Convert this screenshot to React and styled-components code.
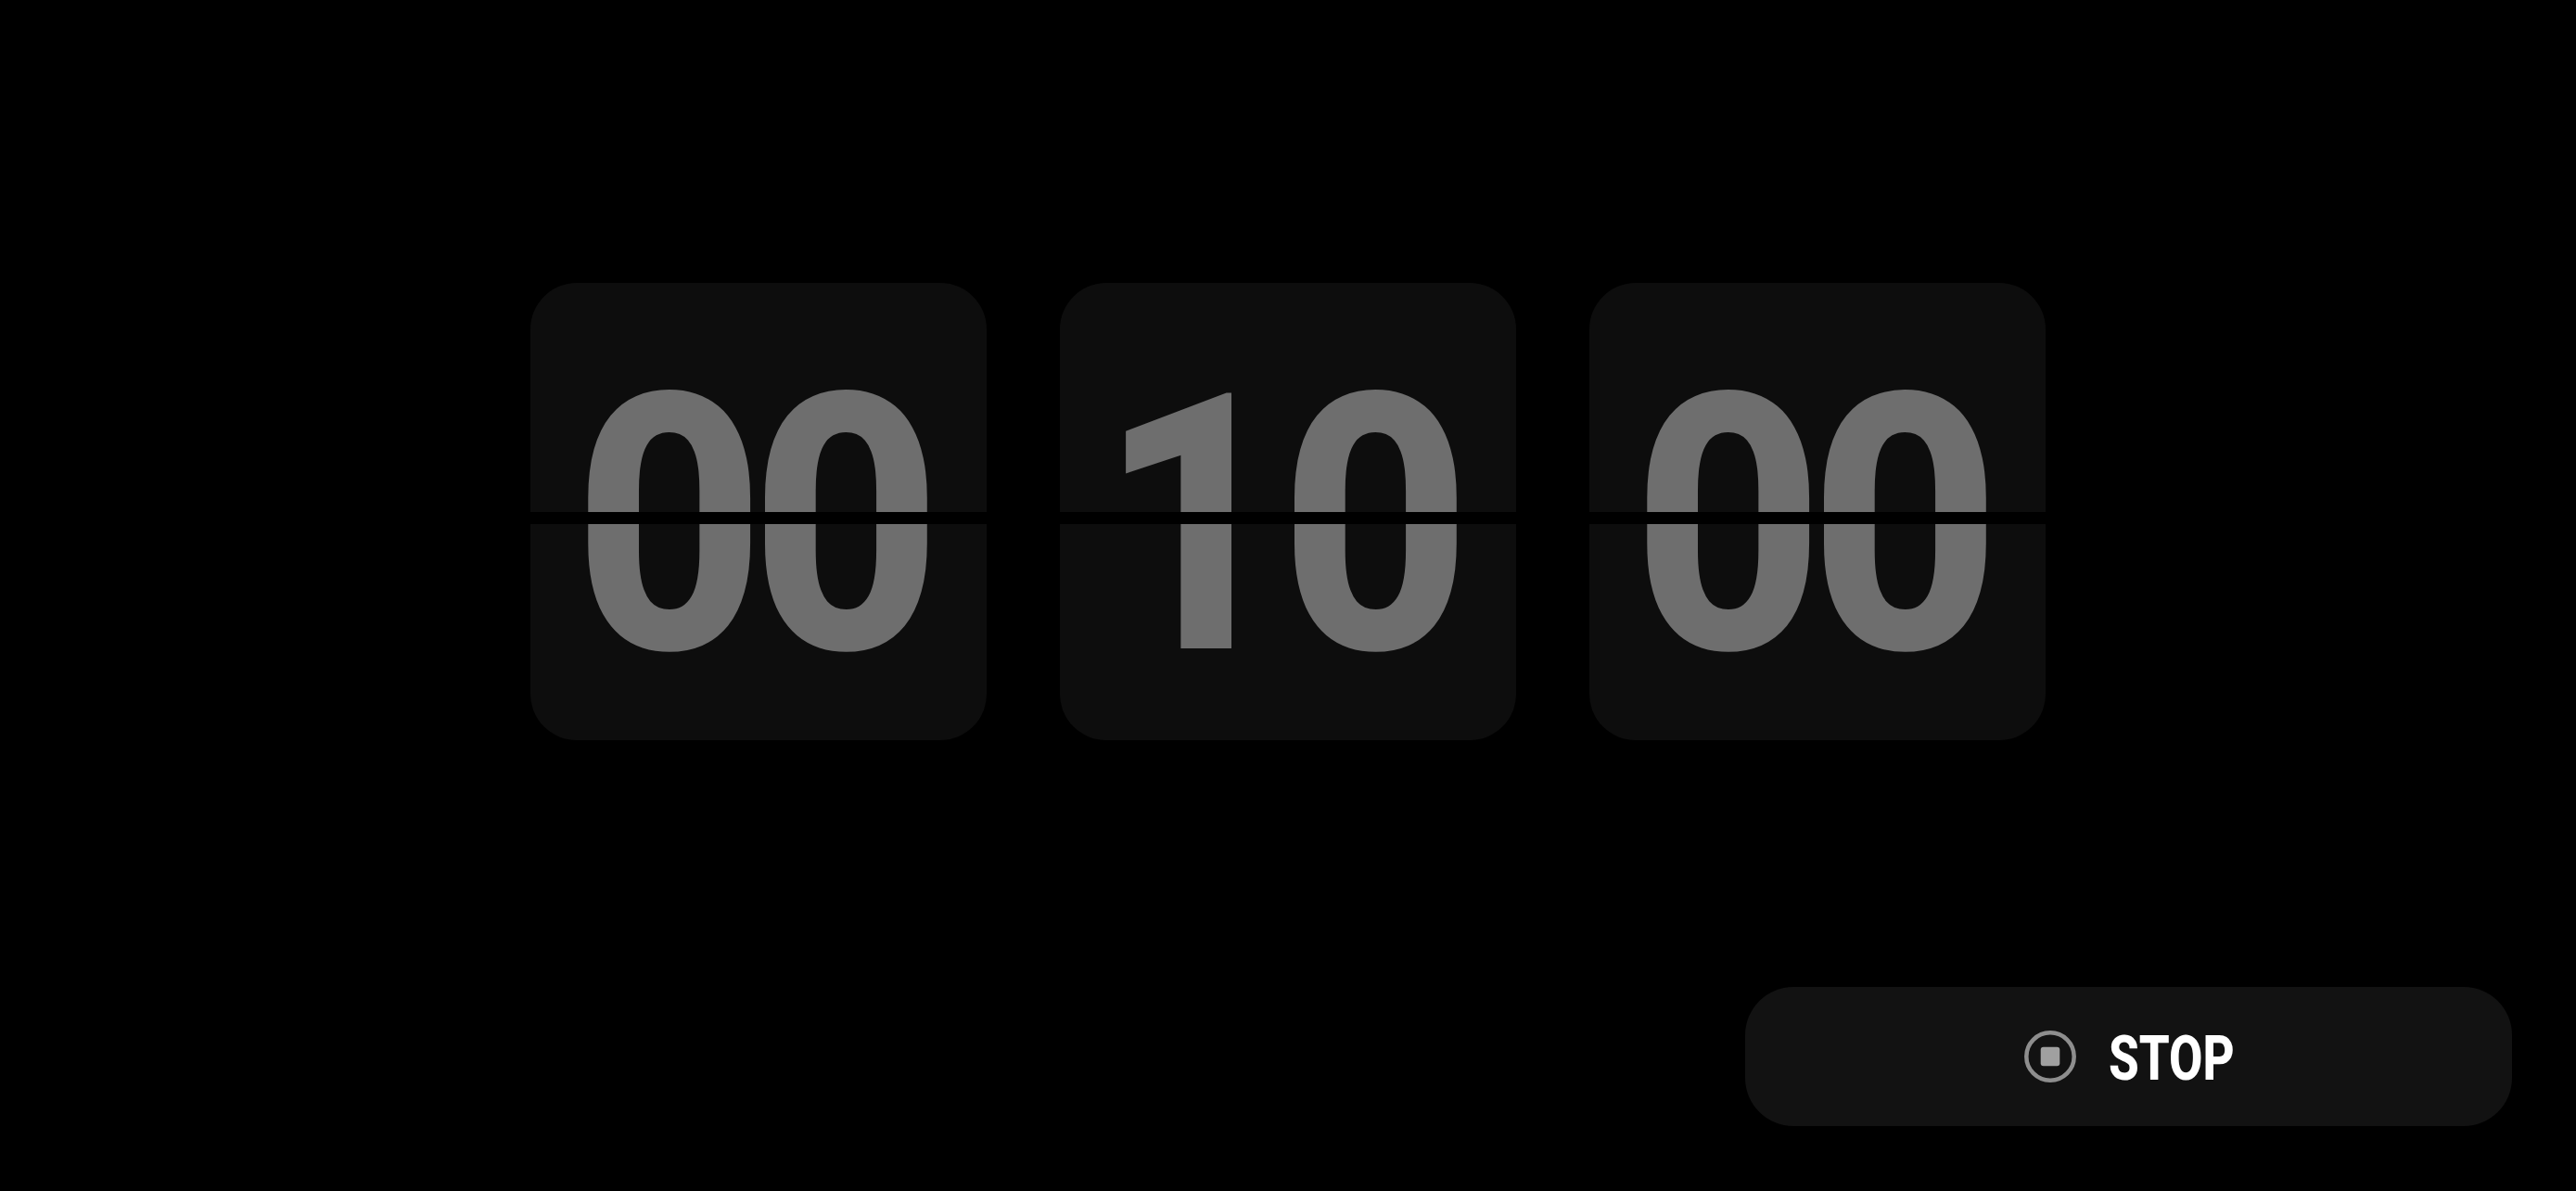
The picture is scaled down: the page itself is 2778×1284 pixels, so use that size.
import React from 'react';
import styled, { createGlobalStyle } from 'styled-components';

const Global = createGlobalStyle`
  html, body { margin: 0; background: #000; }
  body { font-family: Roboto, "Liberation Sans", sans-serif; }
`;

const Page = styled.div`
  width: 2778px;
  height: 1284px;
  overflow: hidden;
  display: flex;
  flex-direction: column;
  background: #000;
`;

const Clock = styled.div`
  margin-top: 305px;
  display: flex;
  justify-content: center;
  gap: 79px;
`;

const Card = styled.div`
  position: relative;
  width: 492px;
  height: 493px;
  box-sizing: border-box;
  padding-top: 30px;
  border-radius: 50px;
  background: #0d0d0d;
  display: flex;
  align-items: center;
  justify-content: center;
  overflow: hidden;
`;

const Digits = styled.span`
  display: inline-block;
  margin-right: 17px;
  font-family: Roboto, "Liberation Sans", sans-serif;
  font-weight: 850;
  font-size: 387px;
  line-height: 1;
  letter-spacing: -17px;
  color: #6e6e6e;
  transform: scaleX(0.925);
`;

const Digit = styled.span`
  display: inline-block;
  margin: 0 ${(p) => (p.$one ? '5px' : '0')} 0 ${(p) => (p.$one ? '-5px' : '0')};
`;

const Split = styled.div`
  position: absolute;
  left: 0;
  right: 0;
  top: 247px;
  height: 13px;
  background: #000;
`;

const Footer = styled.div`
  margin-top: 266px;
  padding-right: 69px;
  display: flex;
  justify-content: flex-end;
`;

const StopButton = styled.button`
  width: 827px;
  height: 150px;
  border: 0;
  border-radius: 52px;
  background: #121212;
  display: flex;
  align-items: center;
  justify-content: center;
  gap: 36px;
  padding: 0;
`;

const StopLabel = styled.span`
  display: inline-block;
  margin: 6px -18.5px 0;
  font-family: Roboto, "Liberation Sans", sans-serif;
  font-weight: 800;
  font-size: 66px;
  line-height: 1;
  color: #fff;
  transform: scaleX(0.8);
`;

const StopIcon = () => (
  <svg width="56" height="56" viewBox="0 0 56 56">
    <circle cx="28" cy="28" r="25.7" fill="none" stroke="#8e8e8e" strokeWidth="4.5" />
    <rect x="17.7" y="17.7" width="20.6" height="20.6" rx="3" fill="#a0a0a0" />
  </svg>
);

const times = ['00', '10', '00'];

export default function App() {
  return (
    <Page>
      <Global />
      <Clock>
        {times.map((t, i) => (
          <Card key={i}>
            <Digits>
              {t.split('').map((d, j) => (
                <Digit key={j} $one={d === '1'}>{d}</Digit>
              ))}
            </Digits>
            <Split />
          </Card>
        ))}
      </Clock>
      <Footer>
        <StopButton>
          <StopIcon />
          <StopLabel>STOP</StopLabel>
        </StopButton>
      </Footer>
    </Page>
  );
}
